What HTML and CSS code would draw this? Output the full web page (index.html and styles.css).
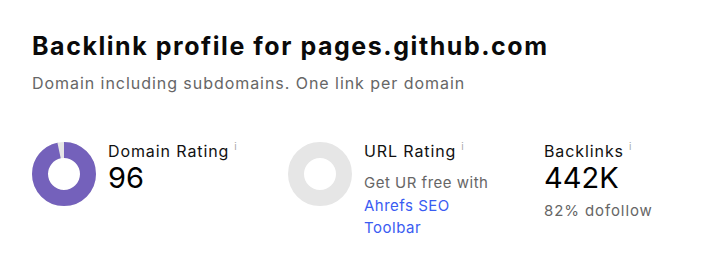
FILE: index.html
```html
<!DOCTYPE html>
<html lang="en">
<head>
<meta charset="utf-8">
<title>Backlink profile</title>
<link rel="stylesheet" href="styles.css">
</head>
<body>
<section class="card">
  <h1 class="title">Backlink profile for pages.github.com</h1>
  <p class="subtitle">Domain including subdomains. One link per domain</p>
  <div class="metrics">
    <div class="metric">
      <svg class="donut" width="64" height="64" viewBox="0 0 64 64" aria-hidden="true">
        <circle cx="32" cy="32" r="24" fill="none" stroke="#e6e6e6" stroke-width="16"/>
        <circle cx="32" cy="32" r="24" fill="none" stroke="#7461bb" stroke-width="16"
          stroke-dasharray="144.76 150.80" transform="rotate(-90 32 32)"/>
      </svg>
      <div class="info">
        <div class="label">Domain Rating<span class="tip">i</span></div>
        <div class="value">96</div>
      </div>
    </div>
    <div class="metric">
      <svg class="donut" width="64" height="64" viewBox="0 0 64 64" aria-hidden="true">
        <circle cx="32" cy="32" r="24" fill="none" stroke="#e6e6e6" stroke-width="16"/>
      </svg>
      <div class="info">
        <div class="label">URL Rating<span class="tip">i</span></div>
        <p class="note">Get UR free with <a class="link" href="#">Ahrefs SEO Toolbar</a></p>
      </div>
    </div>
    <div class="metric">
      <div class="info">
        <div class="label">Backlinks<span class="tip">i</span></div>
        <div class="value">442K</div>
        <div class="sub">82% dofollow</div>
      </div>
    </div>
  </div>
</section>
</body>
</html>
```
FILE: styles.css
```css
* { box-sizing: border-box; }
html, body { margin: 0; padding: 0; background: #fff; }
body { font-family: Inter, "Noto Sans", sans-serif; color: #111; }
.card { padding: 30px 32px 20px; }
.title {
  margin: 0;
  font-size: 25px;
  line-height: 32px;
  font-weight: 700;
  color: #0a0a0a;
  letter-spacing: 1.55px;
}
.subtitle {
  margin: 9px 0 0;
  font-size: 16px;
  line-height: 24px;
  color: #666;
  letter-spacing: 0.95px;
}
.metrics {
  display: grid;
  grid-template-columns: 256px 256px 1fr;
  margin-top: 45px;
}
.metric { display: flex; align-items: flex-start; gap: 12px; }
.donut { flex: none; margin-top: 2px; }
.info { display: flex; flex-direction: column; }
.label {
  font-size: 16px;
  line-height: 22px;
  color: #111;
  letter-spacing: 0.9px;
}
.tip {
  font-size: 10px;
  color: #aaa;
  vertical-align: top;
  margin-left: 5px;
  line-height: 12px;
  letter-spacing: 0;
}
.value { font-size: 29px; line-height: 32px; color: #000; }
.note {
  margin: 10px 0 0;
  width: 132px;
  font-size: 15px;
  line-height: 22.5px;
  color: #666;
  letter-spacing: 0.5px;
}
.link { color: #3a5cf2; text-decoration: none; }
.sub {
  font-size: 15px;
  line-height: 22px;
  color: #666;
  margin-top: 6px;
  letter-spacing: 0.9px;
}
```
